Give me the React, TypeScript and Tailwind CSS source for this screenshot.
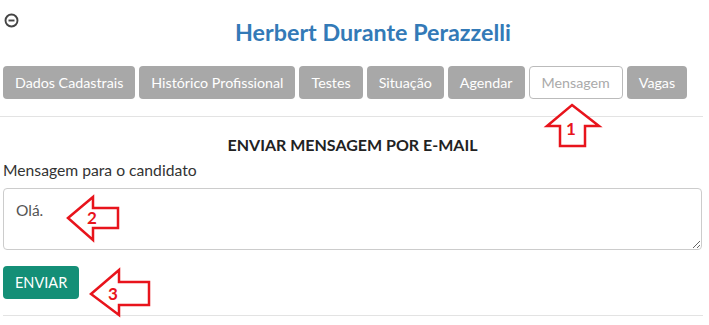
import React from "react";

const tabs = [
  "Dados Cadastrais",
  "Histórico Profissional",
  "Testes",
  "Situação",
  "Agendar",
  "Mensagem",
  "Vagas",
];

export default function App() {
  return (
    <div
      className="relative w-[709px] h-[325px] bg-white overflow-hidden text-[#333]"
      style={{ fontFamily: "Lato, 'Open Sans', sans-serif" }}
    >
      <div className="pl-[3px] w-[702px]">
        <div className="relative h-[56px]">
          <svg
            className="absolute left-[1px] top-[13px]"
            width="15"
            height="15"
            viewBox="0 0 15 15"
          >
            <circle cx="7.5" cy="7.5" r="6" fill="none" stroke="#444" strokeWidth="1.9" />
            <line x1="4.5" y1="7.5" x2="10.5" y2="7.5" stroke="#444" strokeWidth="1.9" />
          </svg>
          <h1 className="pt-[17px] text-center text-[23.3px] leading-[30px] font-bold text-[#337ab7] pl-[41px]">
            Herbert Durante Perazzelli
          </h1>
        </div>
        <div className="flex gap-[4px] mt-[10px]">
          {tabs.map((t) =>
            t === "Mensagem" ? (
              <div
                key={t}
                className="h-[33px] px-[12px] flex items-center rounded-[4px] border border-[#bbb] bg-white text-[#aaa] text-[14.25px]"
              >
                {t}
              </div>
            ) : (
              <div
                key={t}
                className="h-[33px] px-[12px] flex items-center rounded-[4px] bg-[#a8a8a8] text-white text-[14.25px]"
              >
                {t}
              </div>
            )
          )}
        </div>
      </div>
      <div className="mt-[17px] w-[703px] border-t border-[#e3e3e3]" />
      <div className="pl-[3px] w-[702px]">
        <div className="mt-[19px] text-center text-[16px] font-bold leading-[18px] text-[#222]">
          ENVIAR MENSAGEM POR E-MAIL
        </div>
        <div className="mt-[7px] text-[15.7px] leading-[18px] text-[#333]">
          Mensagem para o candidato
        </div>
        <textarea
          className="mt-[9px] block w-full h-[62px] rounded-[4px] border border-[#ccc] px-[12px] py-[10px] text-[15.5px] text-[#555] resize-y outline-none"
          defaultValue="Olá."
          style={{ fontFamily: "Lato, sans-serif" }}
        />
        <button className="mt-[16px] h-[33px] px-[12px] rounded-[4px] bg-[#148f77] text-white text-[14.5px]">
          ENVIAR
        </button>
      </div>
      <div className="mt-[16px] mx-[3px] w-[700px] border-t border-[#e3e3e3]" />

      <svg
        className="absolute left-0 top-0 pointer-events-none"
        width="709"
        height="325"
        viewBox="0 0 709 325"
      >
        <g fill="white" stroke="#e8141c" strokeWidth="2.5" strokeLinejoin="miter">
          <polygon points="572,105 599,126 585,126 585,146 560,146 560,126 547,126" />
          <polygon points="68,218 93,197 93,208 118,208 118,228 93,228 93,240" />
          <polygon points="91,294 119,270 119,282 149,282 149,305 119,305 119,315" />
        </g>
        <g fill="#e8141c" fontFamily="Lato, sans-serif" fontWeight="bold" fontSize="17" textAnchor="middle">
          <text x="571" y="135">1</text>
          <text x="92" y="224">2</text>
          <text x="113" y="300">3</text>
        </g>
      </svg>
    </div>
  );
}
